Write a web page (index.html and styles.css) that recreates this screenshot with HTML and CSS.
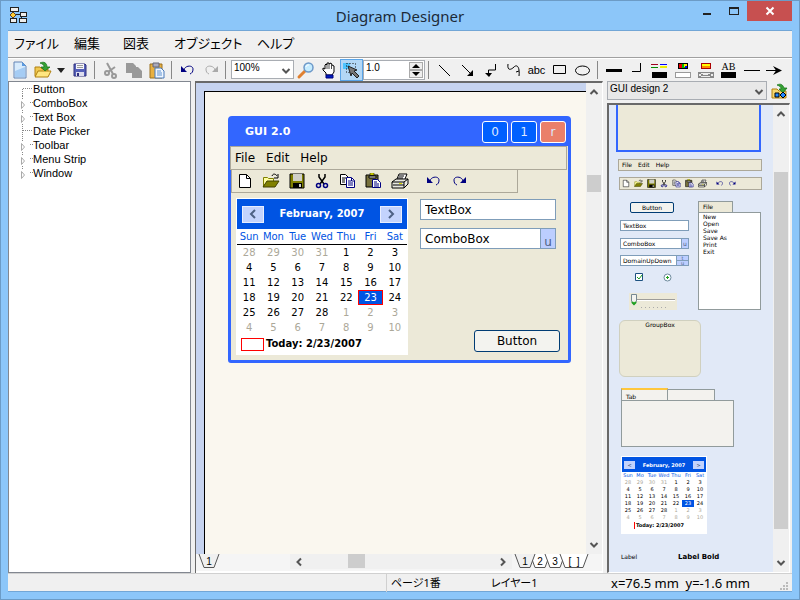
FILE: index.html
```html
<!DOCTYPE html>
<html lang="ja">
<head>
<meta charset="utf-8">
<title>Diagram Designer</title>
<link rel="stylesheet" href="styles.css">
</head>
<body>
<svg class="defs" aria-hidden="true">
  <symbol id="undo-line" viewBox="0 0 16 12"><path d="M1 2v6h6z" fill="#000080"/><path d="M4 6C5 1 13 1 13 5c0 3-1 4-3 5" fill="none" stroke="#000080"/></symbol>
  <symbol id="redo-line" viewBox="0 0 16 12"><path d="M15 2v6H9z" fill="#000080"/><path d="M12 6C11 1 3 1 3 5c0 3 1 4 3 5" fill="none" stroke="#000080"/></symbol>
  <symbol id="g-new" viewBox="0 0 16 16"><path d="M2.500 1.500h7l4 4v9h-11z" fill="#fff" stroke="#000"/><path d="M9.500 1.500v4h4" fill="none" stroke="#000"/></symbol>
  <symbol id="g-open" viewBox="0 0 18 16"><path d="M1.500 14V4.500h4l1 1h5V9" fill="#ffffa0" stroke="#808000"/><path d="M1 14l4-6h12l-4 6z" fill="#808000" stroke="#404000"/><path d="M10 3c1-3 4-2 5 0M16 1v4h-4" fill="none" stroke="#000"/></symbol>
  <symbol id="g-save" viewBox="0 0 16 16"><path d="M1 1h14v14H1z" fill="#808000" stroke="#000"/><path d="M4 1h9v7H4z" fill="#d0d0c8"/><path d="M4 10h9v5H4z" fill="#000"/><path d="M10 11h2v3h-2z" fill="#d0d0c8"/></symbol>
  <symbol id="g-cut" viewBox="0 0 16 16"><path d="M5 1v3l5 7M11 1v3L6 11" fill="none" stroke="#000" stroke-width="1.500"/><circle cx="4.500" cy="12.500" r="2" fill="none" stroke="#000080" stroke-width="1.500"/><circle cx="11.500" cy="12.500" r="2" fill="none" stroke="#000080" stroke-width="1.500"/></symbol>
  <symbol id="g-copy" viewBox="0 0 17 16"><path d="M1.500 1.500h5l3 3v7h-8z" fill="#fff" stroke="#000"/><path d="M3 5h4M3 7h3M3 9h3" stroke="#000"/><path d="M7.500 4.500h5l3 3v7h-8z" fill="#fff" stroke="#000080"/><path d="M9 8h3M9 10h5M9 12h5M12.500 5v3h3" fill="none" stroke="#000080"/></symbol>
  <symbol id="g-paste" viewBox="0 0 17 16"><path d="M1 2h12v12H1z" fill="#77713c" stroke="#000"/><path d="M4 3h7v2H4z" fill="#eee" stroke="#000"/><path d="M5 0h4v2H5z" fill="#ff0" stroke="#000" stroke-width=".5"/><path d="M7.500 6.500h5l3 3v5h-8z" fill="#fff" stroke="#000080"/><path d="M9 9h3M9 11h5M9 13h5" stroke="#000080"/></symbol>
  <symbol id="g-print" viewBox="0 0 18 16"><path d="M6 6l2-5h8l-2 5" fill="#fff" stroke="#000"/><path d="M8 3h5M7 5h5" stroke="#000"/><path d="M1 9l4-3h12v5l-4 4H1z" fill="#e8e8e0" stroke="#000"/><path d="M1 9h12v6M13 9l4-3M2 12h11" fill="none" stroke="#000"/><path d="M8 10h3v1H8z" fill="#dd0"/></symbol>
  <symbol id="chev" viewBox="0 0 10 10"><path d="M1.500 3L5 6.500 8.500 3" fill="none" stroke="#555" stroke-width="2"/></symbol>
</svg>

<header class="titlebar">
  <svg class="app-icon" width="18" height="18" viewBox="0 0 18 18" shape-rendering="crispEdges"><path d="M4 5v9M4 8h8M12 8v6" fill="none" stroke="#222"/><path d="M1 1h8v4H1zM11 6h6v4h-6zM1 12h6v4H1zM10 12h7v4h-7z" fill="#eee" stroke="#222"/><path d="M4 6l3 3-3 3-3-3z" fill="#fc3" stroke="#642"/></svg>
  <h1>Diagram Designer</h1>
  <div class="win-buttons">
    <button class="wb" aria-label="最小化"><svg width="10" height="10"><path d="M1 7h8v2H1z" fill="#222"/></svg></button>
    <button class="wb" aria-label="最大化"><svg width="10" height="10"><path d="M0 1h10v8H0zM1 3v5h8V3z" fill="#222" fill-rule="evenodd"/></svg></button>
    <button class="wb close" aria-label="閉じる"><svg width="10" height="8"><path d="M1.500.5l7 7M8.500.5l-7 7" stroke="#fff" stroke-width="2"/></svg></button>
  </div>
</header>

<div class="client">
  <nav class="menubar"><a href="#">ファイル</a><a href="#">編集</a><a href="#">図表</a><a href="#">オブジェクト</a><a href="#">ヘルプ</a></nav>

  <div class="toolbar">
    <button aria-label="新規"><svg width="16" height="18" viewBox="0 0 16 18"><path d="M2 1h8l4 4v12H2z" fill="#d8ebfc" stroke="#6485b5"/><path d="M3 10l10-4v10H3z" fill="#a5ccf4"/><path d="M10 1v4h4z" fill="#5c9be0"/></svg></button>
    <button aria-label="開く"><svg width="18" height="18" viewBox="0 0 18 18"><path d="M1 15V6h5l2 2h6v7z" fill="#f0c850" stroke="#b08010"/><path d="M1 16l3-6h13l-3 6z" fill="#ffe680" stroke="#b08010"/><path d="M6 2c4-2 7 0 7 4h3l-5 4-4-4h3c0-2-1-3-4-4z" fill="#35a035" stroke="#107010" stroke-width=".7"/></svg></button>
    <button class="drop" aria-label="最近使ったファイル"><svg width="8" height="5"><path d="M0 0h8L4 5z" fill="#222"/></svg></button>
    <button aria-label="保存"><svg width="16" height="16" viewBox="0 0 16 16"><path d="M2 2h11l1 1v11H2z" fill="#5560b8" stroke="#30307c"/><path d="M4 2h8v5H4z" fill="#f5f5fa"/><path d="M5 3.500h6M5 5.500h6" stroke="#999"/><path d="M4 10h8v4H4z" fill="#dde"/><path d="M5 11h2v3H5z" fill="#30307c"/></svg></button>
    <i class="sep"></i>
    <button aria-label="切り取り"><svg width="16" height="17" viewBox="0 0 16 17"><path d="M4 1l6 11M12 5L5 10" stroke="#999" stroke-width="2"/><circle cx="4" cy="11" r="2" fill="none" stroke="#999" stroke-width="2"/><circle cx="11" cy="14" r="2" fill="none" stroke="#999" stroke-width="2"/></svg></button>
    <button aria-label="コピー"><svg width="16" height="16" viewBox="0 0 16 16"><path d="M0 1h7l3 3v7H0zM6 5h6l4 4v7H6z" fill="#999"/></svg></button>
    <button aria-label="貼り付け"><svg width="16" height="17" viewBox="0 0 16 17"><path d="M1 2h12v14H1z" fill="#e8b040" stroke="#9a7020"/><path d="M4 1h6v4H4z" fill="#aab" stroke="#667"/><path d="M6 6h6l3 3v7H6z" fill="#eef6ff" stroke="#4878b8"/><path d="M8 9h4M8 11h5M8 13h5" stroke="#5c90d0"/></svg></button>
    <i class="sep"></i>
    <button aria-label="元に戻す"><svg width="16" height="12"><use href="#undo-line"/></svg></button>
    <button aria-label="やり直し"><svg width="16" height="12"><path d="M15 2v6H9z" fill="#aaa"/><path d="M12 6C11 1 3 1 3 5c0 3 1 4 3 5" fill="none" stroke="#aaa"/></svg></button>
    <i class="sep"></i>
    <span class="select zoom-select"><select aria-label="倍率"><option>100%</option></select><svg width="10" height="10"><use href="#chev"/></svg></span>
    <button aria-label="ズーム"><svg width="16" height="16" viewBox="0 0 16 16"><path d="M1 15l6-6" stroke="#e08030" stroke-width="3" stroke-linecap="round"/><circle cx="10.500" cy="5.500" r="4.500" fill="#c5ecff" stroke="#6c98c8" stroke-width="1.500"/><path d="M8 5c0-2 2-2 3-2" fill="none" stroke="#fff"/></svg></button>
    <button aria-label="移動"><svg width="14" height="17" viewBox="0 0 14 17"><path d="M4 11L1 8V6l2 1V3l1-1 1 1V1h2v1l2-1 1 2 2 1v6l-2 3H4z" fill="#fff" stroke="#000"/><path d="M5 3v4M7 2v5M9.500 3v4" stroke="#000" stroke-width=".7"/><path d="M4 13h7v3H4z" fill="#0020c0" stroke="#000080"/></svg></button>
    <button class="active" aria-label="選択"><svg width="17" height="17" viewBox="0 0 17 17"><path d="M0 1h7v6H0z" fill="#4cc4ff"/><path d="M3.500 1.500h9v9h-9z" fill="none" stroke="#111" stroke-dasharray="1 2"/><path d="M5 4l9 4-3 1 5 5-2 2-5-5-1 3z" fill="#777" stroke="#222"/></svg></button>
    <span class="spin"><input aria-label="線幅" value="1.0"><span class="spin-btns"><button aria-label="増やす"><svg width="8" height="4"><path d="M0 4l4-4 4 4z"/></svg></button><button aria-label="減らす"><svg width="8" height="4"><path d="M0 0l4 4 4-4z"/></svg></button></span></span>
    <i class="sep"></i>
    <button aria-label="直線"><svg width="13" height="13"><path d="M1 1l11 11" stroke="#000"/></svg></button>
    <button aria-label="矢印"><svg width="13" height="13"><path d="M1 1l9 9" stroke="#000"/><path d="M12 6v6H6z"/></svg></button>
    <button aria-label="コネクタ"><svg width="12" height="15"><path d="M10.500 1v6h-7v4" fill="none" stroke="#000"/><path d="M0 10h7l-3 4z"/></svg></button>
    <button aria-label="曲線"><svg width="14" height="15"><path d="M1 1c-1 7 3 6 6 3s6 0 5 9M12 8l-3 1" fill="none" stroke="#000"/></svg></button>
    <button class="abc" aria-label="文字">abc</button>
    <button aria-label="四角形"><svg width="14" height="10"><path d="M.5.5h12v8H.5z" fill="none" stroke="#000"/></svg></button>
    <button aria-label="楕円"><svg width="15" height="11"><ellipse cx="7.500" cy="5.500" rx="7" ry="4.500" fill="none" stroke="#000"/></svg></button>
    <i class="sep"></i>
    <button aria-label="線の太さ"><svg width="16" height="3"><path d="M0 0h16v3H0z"/></svg></button>
    <button aria-label="角"><svg width="10" height="14"><path d="M0 8.500h8.500V0" fill="none" stroke="#000"/></svg></button>
    <button aria-label="線の色"><svg width="17" height="15" shape-rendering="crispEdges"><path d="M0 1h7" stroke="#a00020"/><path d="M0 4h7" stroke="#080"/><path d="M9 1h7" stroke="#00f"/><path d="M9 4h7" stroke="#ee0" stroke-width="2"/><path d="M1 9h15v6H1z"/></svg></button>
    <button aria-label="塗りつぶし"><svg width="16" height="15" shape-rendering="crispEdges"><path d="M3 0h10v6H3z"/><path d="M4 1h3v4H4z" fill="#e00"/><path d="M7 1h3v4H7z" fill="#0b0"/><path d="M9 1h3v3H9z" fill="#fe0"/><path d="M10 3h2v2h-2z" fill="#00f"/><path d="M.5 9.500h15v5H.5z" fill="#fff" stroke="#999"/></svg></button>
    <button aria-label="グラデーション"><svg width="16" height="15" shape-rendering="crispEdges"><path d="M3 0h10v6H3z" fill="#a00"/><path d="M4 1h8v2H4z" fill="#ff0"/><path d="M4 3h8v2H4z" fill="#f80"/><path d="M.5 9.500h15v5H.500z" fill="#eee" stroke="#888"/><path d="M1 10l4 2h5l5-2M1 14l4-2M10 12l5 2" fill="none" stroke="#888"/></svg></button>
    <button class="ab" aria-label="文字色">AB<i></i></button>
    <button aria-label="始点"><svg width="16" height="3"><path d="M0 1.500h16" stroke="#000"/></svg></button>
    <button aria-label="終点"><svg width="17" height="11"><path d="M0 5.500h12" stroke="#000"/><path d="M7 1l9 4.500L7 10l3-4.500z"/></svg></button>
  </div>

  <main class="workspace">
    <aside class="tree">
      <ul>
        <li><svg width="11" height="14"><path d="M.5 14V7M1 6.500h10" class="dot"/></svg>Button</li>
        <li><svg width="11" height="14"><use href="#tw"/></svg>ComboBox</li>
        <li><svg width="11" height="14"><use href="#tw"/></svg>Text Box</li>
        <li><svg width="11" height="14"><path d="M.5 0v14M1 6.500h10" class="dot"/></svg>Date Picker</li>
        <li><svg width="11" height="14"><use href="#tw"/></svg>Toolbar</li>
        <li><svg width="11" height="14"><use href="#tw"/></svg>Menu Strip</li>
        <li><svg width="11" height="14"><g id="tw"><path d="M.5 0v3M8 6.500h3" class="dot"/><path d="M-.5 5.500v7l3-3.500z" fill="#fff" stroke="#aaa"/></g></svg>Window</li>
      </ul>
    </aside>

    <section class="editor">
      <div class="view">
        <div class="page">
          <article class="gui">
            <header class="gui-title"><b>GUI 2.0</b><button>0</button><button>1</button><button class="red">r</button></header>
            <div class="gui-menu"><span>File</span><span>Edit</span><span>Help</span></div>
            <div class="gui-tools">
              <svg width="16" height="16"><use href="#g-new"/></svg><svg width="18" height="16"><use href="#g-open"/></svg><svg width="16" height="16"><use href="#g-save"/></svg><svg width="16" height="16"><use href="#g-cut"/></svg><svg width="17" height="16"><use href="#g-copy"/></svg><svg width="17" height="16"><use href="#g-paste"/></svg><svg width="18" height="16"><use href="#g-print"/></svg><svg class="gap" width="16" height="12"><use href="#undo-line"/></svg><svg width="16" height="12"><use href="#redo-line"/></svg>
            </div>
            <div class="gui-body">
              <div class="cal">
                <div class="cal-head"><button aria-label="前の月"><svg width="8" height="10"><path d="M6 1L2 5l4 4" class="calarrow"/></svg></button><b>February, 2007</b><button aria-label="次の月"><svg width="8" height="10"><path d="M2 1l4 4-4 4" class="calarrow"/></svg></button></div>
                <table>
                  <thead><tr><th>Sun</th><th>Mon</th><th>Tue</th><th>Wed</th><th>Thu</th><th>Fri</th><th>Sat</th></tr></thead>
                  <tbody>
                    <tr><td class="o">28</td><td class="o">29</td><td class="o">30</td><td class="o">31</td><td>1</td><td>2</td><td>3</td></tr>
                    <tr><td>4</td><td>5</td><td>6</td><td>7</td><td>8</td><td>9</td><td>10</td></tr>
                    <tr><td>11</td><td>12</td><td>13</td><td>14</td><td>15</td><td>16</td><td>17</td></tr>
                    <tr><td>18</td><td>19</td><td>20</td><td>21</td><td>22</td><td class="sel">23</td><td>24</td></tr>
                    <tr><td>25</td><td>26</td><td>27</td><td>28</td><td class="o">1</td><td class="o">2</td><td class="o">3</td></tr>
                    <tr><td class="o">4</td><td class="o">5</td><td class="o">6</td><td class="o">7</td><td class="o">8</td><td class="o">9</td><td class="o">10</td></tr>
                  </tbody>
                </table>
                <div class="today"><i></i>Today: 2/23/2007</div>
              </div>
              <div class="fields">
                <input class="tb" aria-label="TextBox" value="TextBox">
                <div class="cb"><input aria-label="ComboBox" value="ComboBox"><button aria-label="開く">u</button></div>
                <button class="gbtn">Button</button>
              </div>
            </div>
          </article>
        </div>
        <div class="vscroll"><svg width="10" height="10" class="flip"><use href="#chev"/></svg><i class="thumb"></i><svg width="10" height="10"><use href="#chev"/></svg></div>
      </div>
      <div class="bottom">
        <div class="tabs pages"><button class="on"><svg width="20" height="14"><path d="M0 0l5 13.500h10L20 0"/></svg>1</button></div>
        <div class="hscroll"><svg width="10" height="10"><path d="M7 1.500L3.500 5 7 8.500" fill="none" stroke="#555" stroke-width="2"/></svg><i class="thumb"></i><svg width="10" height="10"><path d="M3 1.500L6.500 5 3 8.500" fill="none" stroke="#555" stroke-width="2"/></svg></div>
        <div class="tabs layers"><button class="on"><svg width="20" height="14"><path d="M0 0l5 13.500h10L20 0"/></svg>1</button><button><svg width="20" height="14"><path d="M0 0l5 13.500h10L20 0"/></svg>2</button><button><svg width="20" height="14"><path d="M0 0l5 13.500h10L20 0"/></svg>3</button><button class="wide"><svg width="28" height="14"><path d="M0 0l5 13.500h18L28 0"/></svg>[ &nbsp;]</button></div>
      </div>
    </section>

    <aside class="palette">
      <div class="pal-top">
        <span class="select"><select aria-label="テンプレート"><option>GUI design 2</option></select><svg width="10" height="10"><use href="#chev"/></svg></span>
        <button aria-label="テンプレートを開く"><svg width="17" height="17" viewBox="0 0 17 17"><path d="M1 15V6h5l2 2h7v7z" fill="#f5d870" stroke="#b08010"/><path d="M6 2c4-2 6 0 7 3h3l-4 5-4-4h2c0-2-1-3-4-4z" fill="#35a035" stroke="#107010" stroke-width=".7"/><path d="M4 10h4v4H4z" fill="#28f" stroke="#000"/><path d="M12 9l3 3-3 3-3-3z" fill="#28f" stroke="#000"/></svg></button>
      </div>
      <div class="pal-view">
        <div class="stage">
          <div class="item p-win"></div>
          <div class="item p-menu"><span>File</span><span>Edit</span><span>Help</span></div>
          <div class="item p-tools"><svg width="8" height="9"><use href="#g-new"/></svg><svg width="9" height="9"><use href="#g-open"/></svg><svg width="9" height="9"><use href="#g-save"/></svg><svg width="8" height="9"><use href="#g-cut"/></svg><svg width="9" height="9"><use href="#g-copy"/></svg><svg width="9" height="9"><use href="#g-paste"/></svg><svg width="9" height="9"><use href="#g-print"/></svg><svg class="gap" width="8" height="7"><use href="#undo-line"/></svg><svg width="8" height="7"><use href="#redo-line"/></svg></div>
          <button class="item p-btn">Button</button>
          <div class="item p-file">File</div>
          <div class="item p-list"><span>New</span><span>Open</span><span>Save</span><span>Save As</span><span>Print</span><span>Exit</span></div>
          <div class="item p-text">TextBox</div>
          <div class="item p-combo">ComboBox<i>u</i></div>
          <div class="item p-dom">DomainUpDown<i>t</i><i>u</i></div>
          <svg class="item p-check" width="9" height="9"><path d="M.5.5h7v7h-7z" fill="#fff" stroke="#1c5180"/><path d="M2 4l2 2 3-4" fill="none" stroke="#21a121"/></svg>
          <svg class="item p-radio" width="9" height="9"><circle cx="4.500" cy="4.500" r="3.500" fill="#fff" stroke="#6d8a9d"/><path d="M3 4.500h3M4.500 3v3" stroke="#21a121"/></svg>
          <svg class="item p-slider" width="48" height="17"><path d="M0 0h48v17H0z" fill="#ece9d8"/><path d="M6 6.500h40" stroke="#9d9c99"/><path d="M6 7.500h40" stroke="#fff"/><path d="M2.500 1.500h5v7L5 11.500l-2.500-3z" fill="#f3f3ef" stroke="#778892"/><path d="M3 9l2 2 2-2" fill="none" stroke="#21a121" stroke-width="2"/><path d="M12 14.500h28" stroke="#aaa" stroke-dasharray="1 3"/></svg>
          <div class="item p-group">GroupBox</div>
          <div class="item p-tabs"><div><b>Tab</b><b></b></div><section></section></div>
          <div class="item mini">
            <div class="cal-head"><i>&lt;</i><b>February, 2007</b><i>&gt;</i></div>
            <table>
              <thead><tr><th>Sun</th><th>Mo</th><th>Tue</th><th>Wed</th><th>Thu</th><th>Fri</th><th>Sat</th></tr></thead>
              <tbody>
                <tr><td class="o">28</td><td class="o">29</td><td class="o">30</td><td class="o">31</td><td>1</td><td>2</td><td>3</td></tr>
                <tr><td>4</td><td>5</td><td>6</td><td>7</td><td>8</td><td>9</td><td>10</td></tr>
                <tr><td>11</td><td>12</td><td>13</td><td>14</td><td>15</td><td>16</td><td>17</td></tr>
                <tr><td>18</td><td>19</td><td>20</td><td>21</td><td>22</td><td class="sel">23</td><td>24</td></tr>
                <tr><td>25</td><td>26</td><td>27</td><td>28</td><td class="o">1</td><td class="o">2</td><td class="o">3</td></tr>
                <tr><td class="o">4</td><td class="o">5</td><td class="o">6</td><td class="o">7</td><td class="o">8</td><td class="o">9</td><td class="o">10</td></tr>
              </tbody>
            </table>
            <div class="today"><span>Today: 2/23/2007</span></div>
          </div>
          <div class="item p-label">Label</div>
          <div class="item p-bold">Label Bold</div>
        </div>
        <div class="vscroll pal-scroll"><svg width="10" height="10" class="flip"><use href="#chev"/></svg><i class="thumb"></i><svg width="10" height="10"><use href="#chev"/></svg></div>
      </div>
    </aside>
  </main>

  <footer class="status">
    <span></span><span>ページ1番</span><span>レイヤー1</span><span class="coords">x=76.5 mm &nbsp;y=-1.6 mm</span>
    <svg width="9" height="9"><path d="M7 1h2M4 4h2M7 4h2M1 7h2M4 7h2M7 7h2" stroke="#bbb" stroke-width="2"/></svg>
  </footer>
</div>
</body>
</html>
```
FILE: styles.css
```css
* { box-sizing: border-box; }
html, body { height: 100%; }
body {
  margin: 0;
  display: flex;
  flex-direction: column;
  padding: 0 7px 7px;
  border: 1px solid #6c9bc6;
  background: #8cc6f9;
  color: #000;
  font: 11px/14px "Liberation Sans", "Noto Sans CJK JP", sans-serif;
  overflow: hidden;
}
button, input, select { font: inherit; color: inherit; margin: 0; padding: 0; border: 0; background: none; border-radius: 0; min-width: 0; }
svg { display: block; flex: none; overflow: visible; }
.defs { position: absolute; width: 0; height: 0; }

/* title bar */
.titlebar { display: grid; grid-template-columns: 112px 1fr 112px; flex: none; height: 29px; }
.app-icon { margin: 5px 0 0 1px; }
h1 { margin: 0; text-align: center; font: 15px/30px "Noto Sans", sans-serif; color: #1c2a38; }
.win-buttons { display: flex; justify-content: flex-end; height: 20px; }
.wb { width: 27px; display: flex; align-items: center; justify-content: center; }
.close { width: 45px; background: #c75050; }

.client { flex: 1; min-height: 0; display: flex; flex-direction: column; background: #f0f0f0; border: 1px solid #72a6d6; border-width: 1px 0 1px 0; }

.menubar {
  display: grid; grid-template-columns: 60px 49px 51px 83px 1fr;
  flex: none; height: 27px; padding-left: 6px;
  border-bottom: 1px solid #a0a0a0;
  font: 13px/24px "Noto Sans CJK JP", sans-serif;
  font-feature-settings: "palt";
}
.menubar a { color: #000; text-decoration: none; white-space: nowrap; }

/* toolbar */
.toolbar { display: flex; flex: none; height: 23px; border-top: 1px solid #fff; }
.toolbar > button { width: 23px; height: 22px; display: flex; align-items: center; justify-content: center; flex: none; }
.toolbar > .drop { width: 14px; }
.toolbar > .active { background: #b3d7f5; border: 1px solid #5aa5e8; }
.toolbar > .abc { font-size: 11px; }
.toolbar > .ab { flex-direction: column; font: 10px/10px "Liberation Serif", serif; }
.ab i { width: 15px; height: 6px; background: #000; }
.sep { flex: none; width: 8px; position: relative; }
.sep::after { content: ""; position: absolute; left: 3px; top: 2px; bottom: 2px; width: 1px; background: #888; }
.select { position: relative; display: block; }
.select select { appearance: none; width: 100%; height: 100%; padding: 0 16px 4px 2px; border: 1px solid #a9adb3; background: #fff; font-size: 10px; line-height: 12px; display: block; }
.select svg { position: absolute; right: 3px; top: 6px; pointer-events: none; }
.zoom-select { width: 63px; height: 19px; margin: 1px 0 0 1px; }
.spin { display: flex; width: 62px; height: 20px; margin-top: 1px; border: 1px solid #a9adb3; background: #fff; flex: none; }
.spin input { flex: 1; width: 0; height: 14px; padding-left: 2px; font-size: 10px; }
.spin-btns { width: 14px; margin: 1px; display: flex; flex-direction: column; }
.spin-btns button { flex: 1; display: flex; align-items: center; justify-content: center; background: #eee; border: 1px solid #aaa; }

/* workspace */
.workspace { flex: 1; min-height: 0; display: grid; grid-template-columns: 183px minmax(0, 1fr) 185px; column-gap: 4px; }
.tree { background: #fff; border: 1px solid #828790; padding: 0 0 0 13px; }
.tree ul { list-style: none; margin: 0; padding: 0; }
.tree li { display: flex; height: 14px; line-height: 14px; }
.dot { fill: none; stroke: #888; stroke-dasharray: 1 1; }

.editor { display: flex; flex-direction: column; min-height: 0; border: solid #696969; border-width: 2px 0 0 1px; border-right: 1px solid #fff; }
.view { flex: 1; min-height: 0; display: flex; background: #c6d3ef; }
.page { flex: 1; position: relative; margin: 8px 0 0 8px; border: solid #000; border-width: 1px 0 0 1px; background: #faf7ef; overflow: hidden; }
.vscroll { width: 16px; display: flex; flex-direction: column; align-items: center; justify-content: space-between; position: relative; background: #f0f0f0; padding: 4px 0; }
.flip { transform: rotate(180deg); }
.thumb { position: absolute; background: #cdcdcd; }
.vscroll .thumb { left: 1px; right: 1px; top: 92px; height: 17px; }
.bottom { display: flex; flex: none; height: 19px; background: #f5f5f5; border-bottom: 2px solid #fff; }
.pages { flex: 1; }
.hscroll { flex: 0 0 222px; height: 15px; display: flex; align-items: center; justify-content: space-between; position: relative; background: #f0f0f0; padding: 0 4px; }
.hscroll .thumb { left: 58px; top: 0; width: 17px; height: 14px; }
.tabs { display: flex; padding-left: 3px; }
.layers { flex: 0 0 90px; }
.tabs button { position: relative; z-index: 0; width: 20px; height: 14px; font-size: 10px; line-height: 13px; flex: none; }
.tabs button + button { margin-left: -5px; }
.tabs .wide { width: 28px; }
.tabs .on { z-index: 1; }
.tabs svg { position: absolute; left: 0; top: 0; z-index: -1; fill: #fff; stroke: #555; }
.tabs .on svg { fill: #f0f0f0; }

/* drawn window */
.gui { position: absolute; left: 23px; top: 24px; width: 343px; height: 247px; display: flex; flex-direction: column; border: 3px solid #3266ff; border-top-width: 2px; border-radius: 4px 4px 3px 3px; background: #ece9d8; font: 12px/14px "DejaVu Sans", sans-serif; }
.gui-title { display: flex; gap: 3px; align-items: center; height: 28px; padding: 0 2px 0 14px; background: #3266ff; color: #fff; flex: none; }
.gui-title b { flex: 1; font-size: 11px; }
.gui-title button { width: 26px; height: 22px; border: 1px solid #fff; border-radius: 3px; background: #0060ff; color: #dce8ff; }
.gui-title .red { background: #ea806a; }
.gui-menu { display: flex; gap: 11px; align-items: center; height: 24px; padding-left: 4px; border: 1px solid #aca899; margin: 0 1px 0 -1px; flex: none; }
.gui-tools { display: flex; gap: 9px; align-items: center; align-self: flex-start; width: 287px; height: 23px; padding-left: 5px; border: 1px solid #aca899; border-top: 0; flex: none; }
.gui-tools .gap { margin-left: 8px; }
.gui-body { display: flex; gap: 12px; padding: 5px 8px 6px 5px; flex: 1; min-height: 0; }
.cal { width: 172px; height: 157px; padding: 1px; background: #fff; flex: none; font-size: 10px; }
.cal-head { display: flex; align-items: center; justify-content: space-between; height: 30px; padding: 0 5px; background: #0054e3; color: #fff; font: bold 10px/14px "DejaVu Sans", sans-serif; }
.cal-head button { display: flex; align-items: center; justify-content: center; width: 22px; height: 17px; background: #c3d3fd; border: 1px solid #e8eeff; }
.calarrow { fill: none; stroke: #4d6185; stroke-width: 2; }
.cal table { width: 170px; border-collapse: collapse; table-layout: fixed; }
th, td { padding: 0; text-align: center; font-weight: normal; }
.cal th, .cal td { height: 15px; line-height: 15px; }
th { color: #0054e3; }
.cal thead tr { border-bottom: 1px solid #000; }
.o { color: #aca899; }
.sel { background: #0054e3; color: #fff; }
.cal .sel { box-shadow: inset 0 0 0 1px #f00; }
.today { display: flex; align-items: center; gap: 2px; height: 18px; padding-left: 4px; font-weight: bold; }
.today i { width: 23px; height: 13px; border: 1px solid #f00; }
.fields { flex: 1; display: flex; flex-direction: column; gap: 8px; padding-top: 1px; }
.tb, .cb { width: 136px; height: 21px; border: 1px solid #7f9db9; background: #fff; }
.tb, .cb input { padding: 0 0 0 4px; }
.cb { display: flex; }
.cb input { flex: 1; width: 0; }
.cb button { width: 15px; background: #bcceff; border-left: 1px solid #7f9db9; color: #4d6185; padding-top: 6px; line-height: 12px; }
.gbtn { width: 86px; height: 22px; margin: auto 0 2px auto; border: 1px solid #003c74; border-radius: 3px; background: #f3f3ef; }

/* palette */
.palette { display: flex; flex-direction: column; min-height: 0; }
.pal-top { display: flex; gap: 4px; height: 22px; flex: none; align-items: flex-start; }
.pal-top .select { width: 160px; height: 19px; }
.pal-top select { background: #e8e8e8; }
.pal-top button { padding-top: 2px; }
.pal-view { flex: 1; min-height: 0; display: flex; margin-right: 2px; border: 1px solid #fff; border-top: 2px solid #696969; border-left: 2px solid #696969; background: #e1e9f7; }
.stage { position: relative; flex: 1; overflow: hidden; font: 7px/8px "DejaVu Sans", sans-serif; }
.pal-scroll .thumb { top: 67px; height: auto; bottom: 43px; }
.item { position: absolute; white-space: nowrap; }
.p-win { left: 7px; top: 0; width: 145px; height: 47px; border: 2px solid #3266ff; border-top: 0; background: #ece9d8; }
.p-menu { left: 9px; top: 54px; width: 144px; height: 12px; display: flex; align-items: center; gap: 6px; padding-left: 3px; border: 1px solid #aca899; background: #ece9d8; font-size: 6px; }
.p-tools { left: 10px; top: 72px; width: 143px; height: 13px; display: flex; align-items: center; gap: 4px; padding-left: 2px; border: 1px solid #aca899; background: #ece9d8; }
.p-tools .gap { margin-left: 5px; }
.p-btn { left: 21px; top: 97px; width: 44px; height: 11px; border: 1px solid #003c74; border-radius: 2px; background: #f3f3ef; font-size: 6px; line-height: 8px; }
.p-file { left: 89px; top: 96px; width: 35px; height: 12px; padding: 1px 4px; border: 1px solid #919b9c; background: #ece9d8; font-size: 6px; }
.p-list { left: 89px; top: 107px; width: 63px; height: 98px; display: flex; flex-direction: column; padding-left: 4px; border: 1px solid #919b9c; background: #fff; font-size: 6px; line-height: 7px; }
.p-text, .p-combo, .p-dom { left: 11px; width: 69px; height: 11px; padding-left: 2px; border: 1px solid #7f9db9; background: #fff; font-size: 6px; line-height: 9px; }
.p-text { top: 115px; }
.p-combo { top: 133px; }
.p-dom { top: 150px; }
.p-combo i, .p-dom i { position: absolute; right: 0; top: 0; width: 7px; height: 9px; background: #bcceff; color: #4d6185; border-left: 1px solid #7f9db9; font-style: normal; text-align: center; }
.p-dom i { width: 12px; height: 5px; line-height: 4px; font-size: 5px; border-bottom: 1px solid #7f9db9; }
.p-dom i + i { top: 5px; height: 4px; border-bottom: 0; }
.p-check { left: 26px; top: 168px; }
.p-radio { left: 54px; top: 168px; }
.p-slider { left: 20px; top: 188px; }
.p-group { left: 10px; top: 215px; width: 82px; height: 57px; border: 1px solid #d0d0bf; border-radius: 6px; background: #ece9d8; text-align: center; font-size: 6px; }
.p-tabs { left: 12px; top: 283px; width: 113px; }
.p-tabs div { display: flex; height: 12px; }
.p-tabs b { width: 47px; margin-top: 1px; padding: 3px 4px 0; border: 1px solid #919b9c; border-left: 0; border-bottom: 0; background: #f3f2ee; font-size: 6px; font-weight: normal; }
.p-tabs b:first-child { margin-top: 0; border-left: 1px solid #919b9c; border-top: 2px solid #ffc73c; }
.p-tabs section { height: 47px; border: 1px solid #919b9c; background: #f3f2ee; }
.mini { left: 12px; top: 351px; width: 86px; height: 78px; padding: 1px; background: #fff; font-size: 5px; line-height: 7px; }
.mini .cal-head { height: 15px; padding: 0 2px; font-size: 5px; line-height: 8px; }
.mini .cal-head i { width: 11px; height: 8px; background: #c3d3fd; color: #4d6185; text-align: center; font-style: normal; }
.mini table { width: 84px; border-collapse: collapse; table-layout: fixed; }
.mini th, .mini td { height: 7px; line-height: 7px; }
.mini .today { height: 9px; padding-left: 12px; }
.mini .today span { border-left: 1px solid #f00; padding-left: 1px; }
.p-label { left: 12px; top: 448px; font-size: 6px; }
.p-bold { left: 69px; top: 448px; font-size: 7px; font-weight: bold; }

/* status bar */
.status { display: grid; grid-template-columns: minmax(0, 1fr) 105px 120px 168px 13px; flex: none; height: 18px; border-top: 1px solid #d0d0d0; font: 11px/18px "Noto Sans", "Noto Sans CJK JP", sans-serif; font-feature-settings: "palt"; }
.status span { white-space: nowrap; }
.status span:nth-child(2) { border-left: 1px solid #d0d0d0; padding-left: 4px; }
.status .coords { font-size: 13px; }
.status svg { align-self: end; margin-bottom: 1px; }
```
